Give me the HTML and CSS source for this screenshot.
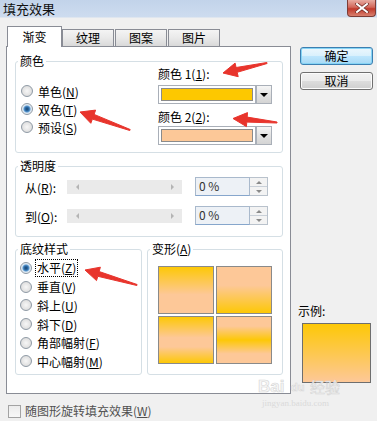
FILE: index.html
```html
<!DOCTYPE html>
<html lang="zh-CN">
<head>
<meta charset="utf-8">
<link rel="stylesheet" href="styles.css">
</head>
<body>
<div class="window">
  <div class="titlebar">
    <span class="title">填充效果</span>
    <span class="close"><svg width="14" height="10" viewBox="0 0 14 10"><path d="M2 1 L12 9 M12 1 L2 9" stroke="#6b2a24" stroke-width="3.4" stroke-linecap="square"/><path d="M2 1 L12 9 M12 1 L2 9" stroke="#fff" stroke-width="2" stroke-linecap="square"/></svg></span>
  </div>
  <div class="content">
    <div class="left">
      <div class="tabs">
        <div class="tab active">渐变</div>
        <div class="tab">纹理</div>
        <div class="tab">图案</div>
        <div class="tab">图片</div>
      </div>
      <div class="panel">
        <div class="group g-color">
          <span class="legend">颜色</span>
          <div class="radios">
            <div class="radio-row"><span class="radio"></span><span>单色(<u>N</u>)</span></div>
            <div class="radio-row"><span class="radio on"></span><span>双色(<u>T</u>)</span></div>
            <div class="radio-row"><span class="radio"></span><span>预设(<u>S</u>)</span></div>
          </div>
          <div class="colors">
            <div class="c-label">颜色 1(<u>1</u>):</div>
            <div class="dropdown"><div class="dd-field"><div class="swatch gold"></div></div><div class="dd-btn"><span class="tri"></span></div></div>
            <div class="c-label second">颜色 2(<u>2</u>):</div>
            <div class="dropdown second"><div class="dd-field"><div class="swatch peach"></div></div><div class="dd-btn"><span class="tri"></span></div></div>
          </div>
        </div>
        <div class="group g-trans">
          <span class="legend">透明度</span>
          <div class="t-row">
            <span class="t-label">从(<u>R</u>):</span>
            <div class="slider"><span class="arr-l"></span><span class="arr-r"></span></div>
            <div class="spin"><div class="spin-field">0 %</div><div class="spin-btns"><span class="up"></span><span class="down"></span></div></div>
          </div>
          <div class="t-row second">
            <span class="t-label">到(<u>O</u>):</span>
            <div class="slider"><span class="arr-l"></span><span class="arr-r"></span></div>
            <div class="spin"><div class="spin-field">0 %</div><div class="spin-btns"><span class="up"></span><span class="down"></span></div></div>
          </div>
        </div>
        <div class="bottom-row">
          <div class="group g-style">
            <span class="legend">底纹样式</span>
            <div class="radio-row s"><span class="radio on"></span><span class="focus">水平(<u>Z</u>)</span></div>
            <div class="radio-row s"><span class="radio"></span><span>垂直(<u>V</u>)</span></div>
            <div class="radio-row s"><span class="radio"></span><span>斜上(<u>U</u>)</span></div>
            <div class="radio-row s"><span class="radio"></span><span>斜下(<u>D</u>)</span></div>
            <div class="radio-row s"><span class="radio"></span><span>角部幅射(<u>F</u>)</span></div>
            <div class="radio-row s"><span class="radio"></span><span>中心幅射(<u>M</u>)</span></div>
          </div>
          <div class="group g-variant">
            <span class="legend">变形(<u>A</u>)</span>
            <div class="tiles">
              <div class="tile t1"></div>
              <div class="tile t2"></div>
              <div class="tile t3"></div>
              <div class="tile t4"></div>
            </div>
          </div>
        </div>
      </div>
    </div>
    <div class="right">
      <div class="btn default">确定</div>
      <div class="btn cancel">取消</div>
      <div class="sample-label">示例:</div>
      <div class="sample"></div>
    </div>
  </div>
  <div class="footer">
    <span class="checkbox"></span>
    <span class="cb-label">随图形旋转填充效果(<u>W</u>)</span>
  </div>
  <div class="watermark"><span class="wm-big">Bai</span><span class="wm-paw">du</span><span class="wm-cn">经验</span><span class="wm-small">jingyan.baidu.com</span></div>
  <svg class="arrows" width="377" height="421" viewBox="0 0 377 421">
    <polygon points="130.2,129.5 94.1,114.4 95.6,110.1 80,112 90.8,123.3 92.4,119.1 129.8,130.5"/>
    <polygon points="266.9,62.5 236.1,67.5 235.1,63.1 223,73 238.2,76.7 237.2,72.3 267.1,63.5"/>
    <polygon points="277,122 247.2,117.1 247.5,112.6 233,118.5 246.4,126.6 246.8,122.1 277,123"/>
    <polygon points="137.1,284.5 99.1,271.5 100.4,267.2 85,270 96.5,280.6 97.8,276.3 136.9,285.5"/>
  </svg>
</div>
</body>
</html>
```

FILE: styles.css
```css
* { box-sizing: border-box; }
html, body { margin: 0; padding: 0; }
body {
  width: 377px;
  height: 421px;
  overflow: hidden;
  background: #f0f0f0;
  font-family: "Noto Sans CJK SC", "Noto Sans", sans-serif;
  font-size: 12px;
  color: #000;
}
u { text-decoration: underline; text-underline-offset: 1px; }

.window {
  position: relative;
  width: 377px;
  height: 421px;
}

.titlebar {
  height: 18px;
  display: flex;
  justify-content: space-between;
  align-items: flex-start;
  background: linear-gradient(#c2d3ea, #cddcef);
  border-bottom: 1px solid #dfe6ef;
}
.title {
  font-size: 13px;
  line-height: 17px;
  padding-left: 3px;
  color: #111;
}
.close {
  width: 29px;
  height: 17px;
  margin-right: 1px;
  border: 1px solid #7d3c35;
  border-top: none;
  border-radius: 0 0 4px 4px;
  background: linear-gradient(#e8aca2, #d2675a 45%, #c0392b 55%, #d9806f);
  display: flex;
  align-items: center;
  justify-content: center;
}

.content {
  display: flex;
  padding-top: 8px;
}
.left {
  margin-left: 6px;
  width: 285px;
}
.tabs {
  height: 20px;
  display: flex;
  align-items: flex-end;
  padding-left: 1px;
}
.tab {
  height: 17px;
  width: 52px;
  margin-right: 1px;
  border: 1px solid #898c95;
  border-bottom: none;
  background: linear-gradient(#f4f4f4, #e9e9e9 50%, #d9d9d9);
  text-align: center;
  line-height: 16px;
  font-size: 12px;
}
.tab.active {
  width: 55px;
  height: 21px;
  margin-right: 0;
  margin-bottom: -1px;
  background: #fff;
  position: relative;
  z-index: 1;
  line-height: 20px;
}

.panel {
  width: 285px;
  height: 348px;
  border: 1px solid #898c95;
  background: #fff;
  padding: 14px 7px 0 8px;
}

.group {
  position: relative;
  border: 1px solid #d5dfe5;
  border-radius: 3px;
}
.legend {
  position: absolute;
  top: -8px;
  left: 2px;
  padding: 0 2px;
  background: #fff;
  line-height: 14px;
  white-space: nowrap;
}

.g-color {
  height: 92px;
  display: flex;
  justify-content: space-between;
  padding: 0 10px 0 5px;
}
.radios { padding-top: 20px; }
.radio-row {
  height: 18px;
  display: flex;
  align-items: center;
  gap: 5px;
  white-space: nowrap;
}
.radio-row.s { height: 18.6px; }
.radio {
  width: 12px;
  height: 12px;
  flex: none;
  border-radius: 50%;
  border: 1px solid #8f9aa5;
  background: radial-gradient(circle at 50% 50%, #f7f7f7 0, #e2e2e2 60%, #cfcfcf 100%);
}
.radio.on {
  background: radial-gradient(circle at 50% 50%, #17436e 0, #2f6ca6 2px, #5d9ad0 3px, #d7e6f3 4px, #f2f2f2 5.5px);
}
.focus {
  outline: 1px dotted #000;
  outline-offset: 1px;
  line-height: 14px;
}

.colors {
  width: 114px;
  padding-top: 5px;
}
.c-label { line-height: 14px; white-space: nowrap; }
.c-label.second { margin-top: 6px; }
.dropdown {
  margin-top: 4px;
  height: 19px;
  display: flex;
}
.dropdown.second { margin-top: 2px; }
.dd-field {
  width: 98px;
  border: 1px solid #a9afb8;
  padding: 2px;
  background: #fff;
}
.swatch {
  height: 100%;
  border: 1px solid #8b8b8b;
}
.gold { background: #fdc800; }
.peach { background: #fcc898; }
.dd-btn {
  width: 16px;
  border: 1px solid #a9afb8;
  background: linear-gradient(#f6f6f6, #e2e2e2 50%, #d4d4d4);
  display: flex;
  align-items: center;
  justify-content: center;
}
.tri {
  width: 0;
  height: 0;
  border-top: 4px solid #000;
  border-left: 4px solid transparent;
  border-right: 4px solid transparent;
}

.g-trans {
  height: 71px;
  margin-top: 13px;
  padding-top: 10px;
}
.t-row {
  height: 19px;
  display: flex;
  align-items: center;
}
.t-row.second { margin-top: 10px; }
.t-label {
  width: 51px;
  padding-left: 9px;
  white-space: nowrap;
  line-height: 14px;
  padding-top: 3px;
}
.slider {
  width: 115px;
  height: 14px;
  background: #eaeaea;
  display: flex;
  align-items: center;
  justify-content: space-between;
  padding: 0 8px 0 9px;
}
.arr-l {
  width: 0; height: 0;
  border-right: 3px solid #b4b4b4;
  border-top: 3px solid transparent;
  border-bottom: 3px solid transparent;
}
.arr-r {
  width: 0; height: 0;
  border-left: 3px solid #b4b4b4;
  border-top: 3px solid transparent;
  border-bottom: 3px solid transparent;
}
.spin {
  margin-left: 13px;
  width: 73px;
  height: 19px;
  display: flex;
}
.spin-field {
  flex: 1;
  border: 1px solid #a9b9cc;
  border-bottom-color: #86a6cc;
  background: #edf1f6;
  color: #333;
  line-height: 16px;
  padding-left: 3px;
  white-space: pre;
}
.spin-btns {
  width: 18px;
  border: 1px solid #b9c2cc;
  border-left: none;
  display: flex;
  flex-direction: column;
  background: #f3f3f3;
}
.spin-btns span {
  flex: 1;
  display: flex;
  align-items: center;
  justify-content: center;
}
.spin-btns .up { border-bottom: 1px solid #c9d0d8; }
.spin-btns .up::before {
  content: "";
  border-bottom: 3px solid #8a8a8a;
  border-left: 3px solid transparent;
  border-right: 3px solid transparent;
}
.spin-btns .down::before {
  content: "";
  border-top: 3px solid #8a8a8a;
  border-left: 3px solid transparent;
  border-right: 3px solid transparent;
}

.bottom-row {
  margin-top: 12px;
  display: flex;
  gap: 5px;
}
.g-style {
  width: 127px;
  height: 126px;
  padding: 9px 0 0 4px;
}
.g-variant {
  width: 136px;
  height: 126px;
  padding: 16px 0 0 10px;
}
.tiles {
  display: grid;
  grid-template-columns: 56px 56px;
  grid-template-rows: 48px 48px;
  gap: 2px;
}
.tile { border: 1px solid #8a8a8a; }
.t1 { background: linear-gradient(#fdc806, #fdc898 60%, #fdc898); }
.t2 { background: linear-gradient(#fdc898, #fdc898 40%, #fdc806); }
.t3 { background: linear-gradient(#fdc806, #fdc898 45%, #fdc898 65%, #fdc806); }
.t4 { background: linear-gradient(#fdc898, #fdc898 20%, #fdc806 50%, #fdc898 80%, #fdc898); }

.right {
  margin-left: 9px;
  width: 73px;
  padding-top: 21px;
}
.btn {
  height: 18px;
  border-radius: 3px;
  text-align: center;
  line-height: 16px;
  font-size: 12px;
}
.btn.default {
  border: 1px solid #3c7fb1;
  background: linear-gradient(#ecf7fd, #d9f0fc 50%, #bee6fd 51%, #a7d9f5);
  box-shadow: inset 0 0 0 1px #86d4f5;
}
.btn.cancel {
  margin-top: 7px;
  border: 1px solid #707070;
  background: linear-gradient(#f2f2f2, #ebebeb 50%, #dddddd 51%, #cfcfcf);
  box-shadow: inset 0 0 0 1px #fcfcfc;
}
.sample-label {
  margin-top: 214px;
  margin-left: -2px;
  line-height: 14px;
}
.sample {
  margin-top: 5px;
  margin-left: 2px;
  width: 69px;
  height: 60px;
  border: 1px solid #6e6e6e;
  background: linear-gradient(#fdc806, #fdc898);
}

.footer {
  margin-top: 9px;
  height: 16px;
  display: flex;
  align-items: center;
  padding-left: 8px;
}
.checkbox {
  width: 13px;
  height: 13px;
  border: 1px solid #a3a3a3;
  background: linear-gradient(#ececec, #f8f8f8);
}
.cb-label {
  margin-left: 4px;
  color: #505050;
  line-height: 14px;
}

.watermark {
  position: absolute;
  left: 258px;
  top: 378px;
  width: 95px;
  height: 32px;
  color: #f6f6f6;
  -webkit-text-stroke: 0.6px #d6d6d6;
  pointer-events: none;
}
.wm-big {
  position: absolute;
  left: 0;
  top: 0;
  font-family: "Liberation Sans", sans-serif;
  font-size: 17px;
  font-weight: bold;
  line-height: 18px;
}
.wm-paw {
  position: absolute;
  left: 33px;
  top: 0;
  font-family: "Liberation Sans", sans-serif;
  font-size: 11px;
  font-weight: bold;
  line-height: 18px;
}
.wm-cn {
  position: absolute;
  left: 52px;
  top: 0;
  font-size: 15px;
  line-height: 18px;
}
.wm-small {
  position: absolute;
  left: 4px;
  top: 20px;
  font-family: "Liberation Serif", serif;
  font-size: 9px;
  line-height: 10px;
  -webkit-text-stroke: 0;
  color: #dadada;
}

.arrows {
  position: absolute;
  left: 0;
  top: 0;
  pointer-events: none;
}
.arrows polygon {
  fill: #e8342c;
  stroke: #e8342c;
  stroke-width: 1;
  stroke-linejoin: round;
}
```
